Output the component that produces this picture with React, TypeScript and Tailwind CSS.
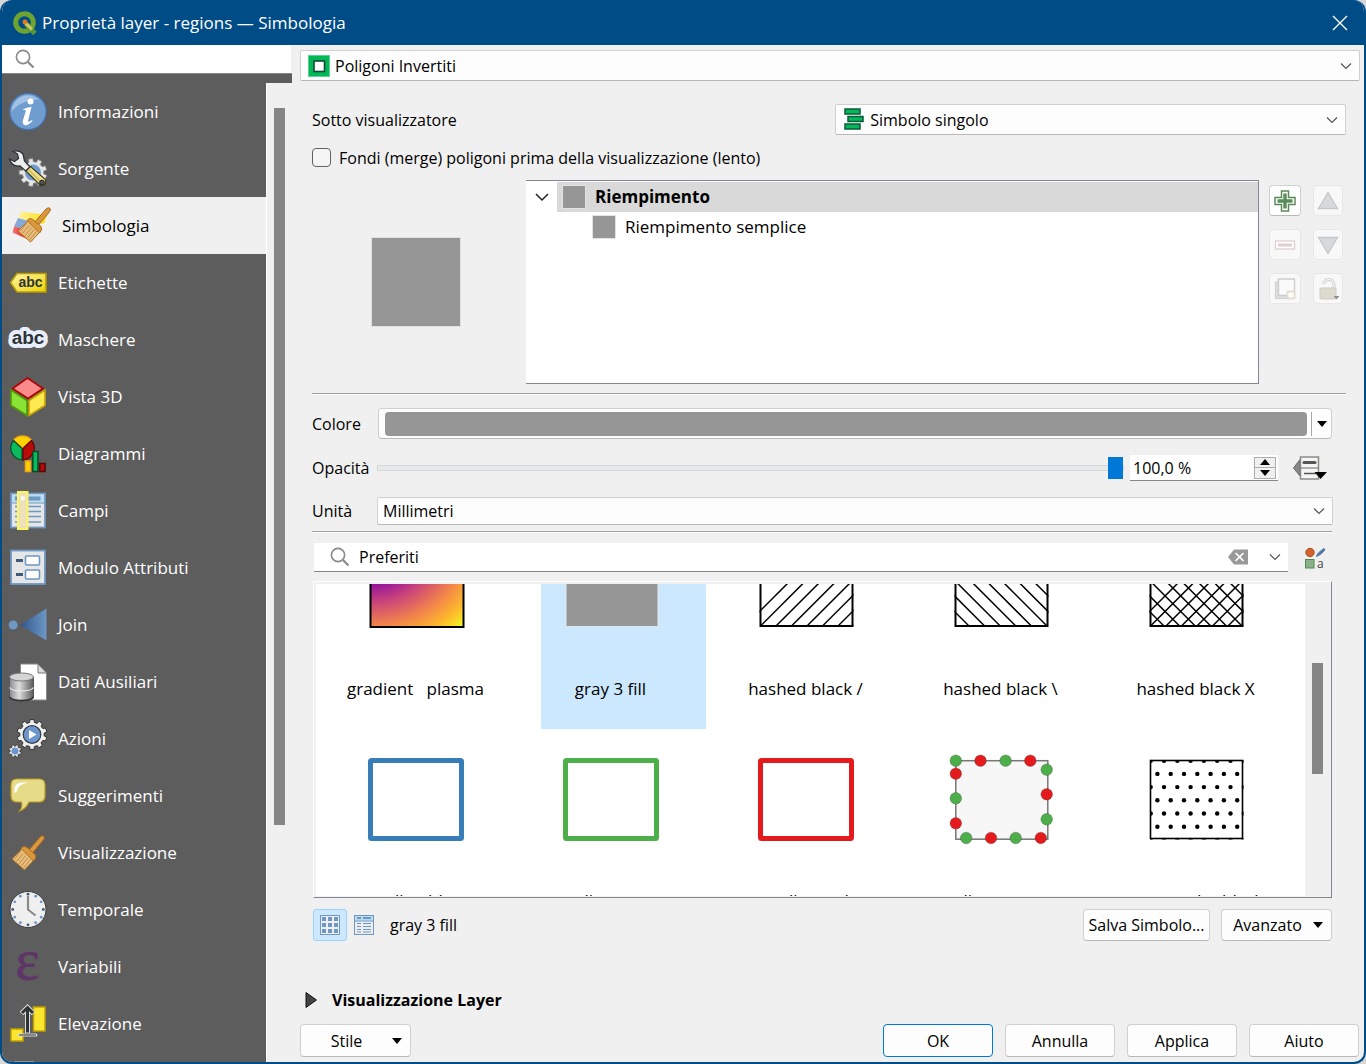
import { ReactNode, useState } from 'react';
import clsx from 'clsx';

/* ---------- helpers ---------- */

function gearPath(cx: number, cy: number, outer: number, inner: number, teeth: number) {
  const step = (Math.PI * 2) / teeth;
  const points: string[] = [];
  for (let i = 0; i < teeth; i++) {
    const a = i * step + step / 2;
    const corners: [number, number][] = [
      [inner, -0.3],
      [outer, -0.22],
      [outer, 0.22],
      [inner, 0.3],
    ];
    corners.forEach(([r, t]) => {
      points.push(`${(cx + r * Math.cos(a + t * step)).toFixed(1)} ${(cy + r * Math.sin(a + t * step)).toFixed(1)}`);
    });
  }
  return `M${points.join('L')}Z`;
}

function Chevron({ className }: { className?: string }) {
  return (
    <svg viewBox="0 0 14 14" className={clsx('size-[14px] pointer-events-none', className)} fill="none" stroke="currentColor" strokeWidth="1.2">
      <path d="M2 4.5 7 9.5 12 4.5" />
    </svg>
  );
}

function Caret({ className }: { className?: string }) {
  return (
    <svg viewBox="0 0 10 6" className={clsx('w-[10px] h-[6px]', className)}>
      <path d="M0 0H10L5 6Z" fill="#000" />
    </svg>
  );
}

function SearchGlyph() {
  return (
    <svg viewBox="0 0 20 20" className="size-5 shrink-0" fill="none" stroke="#8a8a8a">
      <circle cx="8" cy="8" r="6.6" strokeWidth="1.6" />
      <path d="M13 13 18.5 18.5" strokeWidth="2.2" />
    </svg>
  );
}

/* ---------- sidebar icons ---------- */

function Brush({ x = 0, y = 0 }: { x?: number; y?: number }) {
  return (
    <g transform={`translate(${x} ${y})`}>
      <path d="M20.500 17.500 32.500 3.500Q34.500 2 36 3.500 37 5 35.500 6.800L24.500 20Z" fill="#d9973f" stroke="#a8661a" strokeWidth="1" />
      <path d="M14 15.500 26.500 24.500 25 28 16.500 37 4 26 13 17Z" fill="#e7bd7d" stroke="#b0711e" strokeWidth="1" />
      <path d="M13 15.500Q16 12 19.500 15L27 21.500Q29 25 25.500 28Z" fill="#d9973f" stroke="#b0711e" strokeWidth="1" />
      <path d="M12.500 18.500 6 26.500M15 20.500 8.500 28.500M17.500 22.500 11 31M20 24.500 13.500 33M22.500 26.500 15.500 35" stroke="#b98036" strokeWidth=".8" />
    </g>
  );
}

const ICONS: Record<string, ReactNode> = {
  info: (
    <>
      <circle cx="20" cy="19.500" r="18.200" fill="#6f9dd0" stroke="#4571ad" strokeWidth="1.200" />
      <path d="M3.500 20A16.500 16.500 0 0 1 31 7.500Q12 8 3.500 20Z" fill="#a3c1e4" />
      <circle cx="22.500" cy="9.500" r="3" fill="#fff" />
      <path d="M14.500 17.500Q19 15.500 23.500 14.800L20 29Q20.500 31 24 28L24.500 29Q20 34 16.500 33 14 32 15 28L18 18.500Z" fill="#fff" />
    </>
  ),
  source: (
    <>
      <path d={gearPath(25, 23.5, 14, 10.8, 9)} fill="#e6e6e6" stroke="#8a8a8a" strokeWidth=".8" />
      <circle cx="25" cy="23.500" r="8" fill="#6f9dd0" />
      <path d="M5 2.500Q11 .5 15 5L16.500 12 22 18 17.500 22 12 17Q4 18 1.500 10L6.500 12.500 10.500 9.500 9.500 5Z" fill="#eceeed" stroke="#2e3436" strokeWidth="1.300" />
      <path d="M18 22 22.500 17.500 37.500 30.500Q39 36 33 37Z" fill="#efe08a" stroke="#3c3a22" strokeWidth="1.200" />
      <path d="M21 21 32 32" stroke="#c9b65d" strokeWidth="1.500" />
      <circle cx="34" cy="33.500" r="2.400" fill="#555" stroke="#222" />
    </>
  ),
  symbology: (
    <>
      <path d="M9.500 5.500 35 9 32 18 6 12Z" fill="url(#symYellow)" />
      <path d="M6 12 27 18 22 28 2 20.500Z" fill="#86a9d8" />
      <path d="M2 20.500 24 27 20 35 .5 26.500Z" fill="url(#symRed)" />
      <Brush x={2} y={-1} />
      <defs>
        <linearGradient id="symYellow"><stop offset="0" stopColor="#fff3a0" /><stop offset="1" stopColor="#fce013" /></linearGradient>
        <linearGradient id="symRed"><stop offset="0" stopColor="#f47b7b" /><stop offset=".5" stopColor="#ee1c1c" /></linearGradient>
      </defs>
    </>
  ),
  labels: (
    <>
      <path d="M2.500 19.500 9 10.500H38V29H9Z" fill="url(#tagFill)" stroke="#b99a08" strokeWidth="1.600" />
      <text x="22.500" y="23.500" textAnchor="middle" fontFamily="'Liberation Sans', sans-serif" fontWeight="700" fontSize="14" fill="#2e3436">abc</text>
      <defs>
        <linearGradient id="tagFill" x2="1" y2="1"><stop offset="0" stopColor="#fff7a8" /><stop offset="1" stopColor="#ecd200" /></linearGradient>
      </defs>
    </>
  ),
  masks: (
    <text x="20" y="24" textAnchor="middle" fontFamily="'Liberation Sans', sans-serif" fontWeight="700" fontSize="19" fill="#2e3436" stroke="#e9eefc" strokeWidth="8" strokeLinejoin="round" paintOrder="stroke">abc</text>
  ),
  view3d: (
    <g strokeWidth="1.600">
      <path d="M3 13 19 23.500V38.500L3 28.500Z" fill="#8ae234" stroke="#4e9a06" />
      <path d="M37 13 21 23.500V38.500L37 28.500Z" fill="#fce94f" stroke="#c4a000" />
      <path d="M19.500 1 35 11.500 20 21.500 4.500 11.500Z" fill="#f98b8b" stroke="#b30000" />
    </g>
  ),
  diagrams: (
    <>
      <path d="M14.500 14 5.500 6A12 12 0 0 1 23.500 6Z" fill="#fdd400" stroke="#f5a214" strokeWidth="1.200" />
      <path d="M14 14.500V26A12 12 0 0 1 5.500 6.500Z" fill="#0abb5b" stroke="#0a4a2a" strokeWidth="1.200" />
      <path d="M15 14.500V26A12 12 0 0 0 23.500 6.500Z" fill="#b80c09" stroke="#5e0605" strokeWidth="1.200" />
      <path d="M17.500 27V37.500H22.500V27Z" fill="#fdd400" stroke="#f5a214" strokeWidth="1.600" />
      <path d="M24.800 17.500V37.500H30V17.500Z" fill="#0abb5b" stroke="#0a4a2a" strokeWidth="1.600" />
      <path d="M31.800 29.500V37.500H37V29.500Z" fill="#b80c09" stroke="#5e0605" strokeWidth="1.600" />
    </>
  ),
  fields: (
    <>
      <rect x="3" y="2.500" width="34" height="34" fill="#e6e6e6" stroke="#6d97c4" strokeWidth="1.800" />
      <rect x="4" y="3.500" width="32" height="8" fill="#b9dcee" />
      <rect x="7" y="5.500" width="25.500" height="4" fill="#6d97c4" />
      <path d="M3 12H37" stroke="#6d97c4" strokeWidth="1.200" />
      <path d="M7 15.500H33M7 20.500H33M7 25.500H33M7 31H33" stroke="#6d97c4" strokeWidth="1.600" />
      <rect x="10" y="1" width="9.500" height="37" fill="#eee0b8" stroke="#fdf65f" strokeWidth="2" />
      <rect x="13" y="5.500" width="3.500" height="3.500" fill="#fff" />
    </>
  ),
  form: (
    <>
      <rect x="3" y="2.500" width="34" height="33.500" fill="#e6e6e6" stroke="#6d97c4" strokeWidth="1.800" />
      <path d="M8 12.500H15M8 26.500H15" stroke="#415a75" strokeWidth="3" />
      <rect x="17.500" y="8" width="14" height="9" rx="1" fill="#fff" stroke="#6d97c4" strokeWidth="1.600" />
      <rect x="17.500" y="22" width="14" height="9" rx="1" fill="#fff" stroke="#6d97c4" strokeWidth="1.600" />
    </>
  ),
  join: (
    <>
      <circle cx="5.200" cy="20" r="4.500" fill="#6d97c4" />
      <path d="M12 20 38.500 3.500V35.500Z" fill="url(#joinFill)" />
      <defs>
        <linearGradient id="joinFill"><stop offset="0" stopColor="#30568c" /><stop offset="1" stopColor="#6d97c4" /></linearGradient>
      </defs>
    </>
  ),
  auxiliary: (
    <>
      <path d="M12.500 2H30L38.500 11V38H12.500Z" fill="#fff" stroke="#888" />
      <path d="M30 2V11H38.500Z" fill="#ddd" stroke="#777" />
      <path d="M1.500 15V35Q2 39 13.500 39T25.500 35V15Z" fill="url(#dbFill)" stroke="#555" />
      <ellipse cx="13.500" cy="15" rx="12" ry="4" fill="#d5d5d5" stroke="#777" />
      <path d="M1.500 25.500Q4 29 13.500 29T25.500 25.500" fill="none" stroke="#eee" strokeWidth="1.200" />
      <path d="M1.500 35Q4 38.500 13.500 38.500T25.500 35" fill="none" stroke="#333" strokeWidth="1.500" />
      <defs>
        <linearGradient id="dbFill"><stop offset="0" stopColor="#8a8a8a" /><stop offset=".4" stopColor="#dedede" /><stop offset="1" stopColor="#5a5a5a" /></linearGradient>
      </defs>
    </>
  ),
  actions: (
    <>
      <path d={gearPath(24, 15.500, 15, 12.3, 10)} fill="#f0f0ef" stroke="#333" strokeWidth="1" />
      <circle cx="24" cy="15.500" r="8.800" fill="#6d97cc" stroke="#333a45" strokeWidth="1.200" />
      <path d="M21 11V20L28.500 15.500Z" fill="#fff" />
      <path d={gearPath(7, 32, 6.600, 5, 8)} fill="#f0f0ef" stroke="#333" strokeWidth=".8" />
      <circle cx="7" cy="32" r="3.600" fill="#6d97cc" />
    </>
  ),
  tips: (
    <>
      <path d="M9 3H31Q37 3 37 9V20Q37 26 31 26H21Q18 33 11.500 35 15 31 13.500 26H9Q3 26 3 20V9Q3 3 9 3Z" fill="#e6dc88" stroke="#c09b1e" strokeWidth="1.200" />
      <path d="M6.500 17Q5 6.500 14 6.500H21Q10 7.500 8.500 16Z" fill="#fff" />
    </>
  ),
  rendering: <Brush />,
  temporal: (
    <>
      <circle cx="20" cy="19.500" r="18" fill="#efefef" stroke="#3d3d3d" strokeWidth="1" />
      {Array.from({ length: 12 }, (_, i) => {
        const a = (i * Math.PI) / 6;
        return <circle key={i} cx={20 + 15.3 * Math.sin(a)} cy={19.5 - 15.3 * Math.cos(a)} r="1.400" fill={i % 3 ? '#6d97cc' : '#415a75'} />;
      })}
      <path d="M20 6V19.500L27.500 25.500" fill="none" stroke="#8b8b8b" strokeWidth="2.200" />
    </>
  ),
  variables: (
    <text x="19.500" y="32" textAnchor="middle" fontFamily="'Liberation Serif', serif" fontSize="58" fill="#5f3568" stroke="#5f3568" strokeWidth=".8">ε</text>
  ),
  elevation: (
    <>
      <rect x="25.500" y="3" width="11.500" height="24" fill="#fbe62e" stroke="#c4a000" strokeWidth="1.500" />
      <rect x="3" y="25" width="12" height="12" fill="#fbe62e" stroke="#c4a000" strokeWidth="1.500" />
      <path d="M11 31H28" stroke="#ddd" strokeWidth="3" strokeLinecap="round" />
      <path d="M11 31H28" stroke="#2e3436" strokeWidth="1.200" />
      <path d="M19.500 4V29M13.500 9.500 19.500 3.500 25.500 9.500" fill="none" stroke="#ddd" strokeWidth="5" />
      <path d="M19.500 4V28.500M14 9 19.500 3.500 25 9" fill="none" stroke="#2e3436" strokeWidth="3" />
    </>
  ),
};

const PAGES = [
  { id: 'info', label: 'Informazioni' },
  { id: 'source', label: 'Sorgente' },
  { id: 'symbology', label: 'Simbologia' },
  { id: 'labels', label: 'Etichette' },
  { id: 'masks', label: 'Maschere' },
  { id: 'view3d', label: 'Vista 3D' },
  { id: 'diagrams', label: 'Diagrammi' },
  { id: 'fields', label: 'Campi' },
  { id: 'form', label: 'Modulo Attributi' },
  { id: 'join', label: 'Join' },
  { id: 'auxiliary', label: 'Dati Ausiliari' },
  { id: 'actions', label: 'Azioni' },
  { id: 'tips', label: 'Suggerimenti' },
  { id: 'rendering', label: 'Visualizzazione' },
  { id: 'temporal', label: 'Temporale' },
  { id: 'variables', label: 'Variabili' },
  { id: 'elevation', label: 'Elevazione' },
];

function Sidebar() {
  const [active, setActive] = useState('symbology');

  return (
    <aside className="w-[290px] shrink-0 flex flex-col min-h-0">
      <label className="h-7 shrink-0 bg-white flex items-center gap-2 pl-[13px] mr-px">
        <SearchGlyph />
        <input type="text" aria-label="Cerca" className="min-w-0 flex-1 outline-none text-base" />
      </label>
      <div className="h-[10px] shrink-0 bg-[#5d5d5d] border-t border-[#858585]" />
      <div className="flex flex-1 min-h-0">
        <nav className="w-[264px] bg-[#5d5d5d] overflow-hidden">
          {PAGES.map((page) => (
            <button
              key={page.id}
              type="button"
              onClick={() => setActive(page.id)}
              className={clsx(
                'w-full h-[57px] flex items-center gap-[10px] text-[17px] text-left',
                page.id === active ? 'bg-[#f0f0f0] text-black pl-[10px]' : 'text-white pl-[6px]'
              )}
            >
              <svg viewBox="0 0 40 40" className="size-10 shrink-0 overflow-visible">{ICONS[page.id]}</svg>
              {page.label}
            </button>
          ))}
          <div className="ml-3 mt-[9px] w-5 h-1 bg-[#8f8f8f]" />
        </nav>
        <div className="flex-1 border-l border-white pl-[7px] pt-[25px]">
          <div className="w-[11px] h-[717px] bg-[#858585]" />
        </div>
      </div>
    </aside>
  );
}

/* ---------- form controls ---------- */

interface ComboProps {
  label: string;
  id?: string;
  value: string;
  icon?: ReactNode;
  className?: string;
}

function Combo({ label, id, value, icon, className }: ComboProps) {
  return (
    <div className={clsx('relative flex items-center', className)}>
      {icon && <span className="absolute left-2 pointer-events-none">{icon}</span>}
      <select
        id={id}
        aria-label={label}
        defaultValue={value}
        className={clsx(
          'appearance-none w-full h-full bg-[#fdfdfd] border border-[#d0d0d0] border-b-[#b8b8b8] rounded-xs pr-8 outline-none',
          icon ? 'pl-[34px]' : 'pl-[5px]'
        )}
      >
        <option>{value}</option>
      </select>
      <Chevron className="absolute right-[7px] text-[#555]" />
    </div>
  );
}

function PushButton({ children, primary, className }: { children: ReactNode; primary?: boolean; className?: string }) {
  return (
    <button
      type="button"
      className={clsx(
        'rounded-[4px] border bg-[#fdfdfd] flex items-center justify-center whitespace-nowrap',
        primary ? 'border-[#0078d4]' : 'border-[#d0d0d0] border-b-[#b8b8b8]',
        className
      )}
    >
      {children}
    </button>
  );
}

function ToolButton({ label, disabled, children }: { label: string; disabled?: boolean; children: ReactNode }) {
  return (
    <button
      type="button"
      aria-label={label}
      disabled={disabled}
      className={clsx(
        'h-[31px] rounded-[4px] border flex items-center justify-center',
        disabled ? 'bg-[#f8f8f8] border-[#e7e7e7]' : 'bg-white border-[#d0d0d0] border-b-[#b8b8b8]'
      )}
    >
      <svg viewBox="0 0 24 24" className="size-6">{children}</svg>
    </button>
  );
}

function Separator({ className }: { className?: string }) {
  return <hr className={clsx('h-[2px] border-0 border-t border-[#a0a0a0] bg-white shrink-0', className)} />;
}

function LayerTools() {
  return (
    <div className="grid grid-cols-[32px_30px] gap-x-3 gap-y-[13px] content-start pt-[5px] pr-[3px]">
      <ToolButton label="Aggiungi livello">
        <path d="M8.500 2H15.500V8.500H22V15.500H15.500V22H8.500V15.500H2V8.500H8.500Z" fill="#fff" stroke="#5a8c5a" strokeWidth="1.500" />
        <path d="M12 4.500V19.500M4.500 12H19.500" stroke="#5a8c5a" strokeWidth="3.400" />
      </ToolButton>
      <ToolButton label="Sposta su" disabled>
        <path d="M12 3.500 21.500 19.500H2.500Z" fill="#d6dadd" stroke="#c4c6c7" strokeWidth="1.300" />
      </ToolButton>
      <ToolButton label="Rimuovi livello" disabled>
        <rect x="2.500" y="8" width="19" height="8" fill="#fff" stroke="#e0cfd1" strokeWidth="1.300" />
        <path d="M5 12H19" stroke="#e0cfd1" strokeWidth="3" />
      </ToolButton>
      <ToolButton label="Sposta giù" disabled>
        <path d="M12 20.500 21.500 4.500H2.500Z" fill="#d6dadd" stroke="#c4c6c7" strokeWidth="1.300" />
      </ToolButton>
      <ToolButton label="Duplica livello" disabled>
        <path d="M2.500 5H16V21.500H2.500Z" fill="#dedede" stroke="#cfcfcf" />
        <path d="M5.500 2H21.500V18.500H5.500Z" fill="#fafafa" stroke="#cdcdcd" strokeWidth="1.400" />
        <rect x="13.500" y="13.500" width="9" height="9" rx="2" fill="#e0dfd2" />
        <path d="M18 15V21M15.300 16.500 20.700 19.500M20.700 16.500 15.300 19.500" stroke="#fff" strokeWidth="1.500" />
      </ToolButton>
      <ToolButton label="Blocca colore" disabled>
        <path d="M7.500 7Q8.500 2.500 13 2.500T18 8V11" fill="none" stroke="#d3d3d3" strokeWidth="3.200" />
        <path d="M7.500 7Q8.500 2.500 13 2.500T18 8V11" fill="none" stroke="#f6f6f6" strokeWidth="1.200" />
        <rect x="4" y="11" width="16" height="11" rx="1" fill="#dddbce" stroke="#cdcbbe" />
        <path d="M17.500 19H23.500L20.500 22.500Z" fill="#8f8f8f" />
      </ToolButton>
    </div>
  );
}

/* ---------- symbol swatches ---------- */

const GREEN = '#4daf4a';
const RED = '#e41a1c';

function Hatch({ id, forward, backward }: { id: string; forward?: boolean; backward?: boolean }) {
  const lines = Array.from({ length: 14 }, (_, i) => i);
  return (
    <>
      <clipPath id={id}><rect x="11.500" y="10" width="94" height="79" /></clipPath>
      <g clipPath={`url(#${id})`} stroke="#000" strokeWidth="1.500">
        {forward && lines.map((i) => <path key={`f${i}`} d={`M${12.5 + 15.5 * (i - 1)} 88l90 -90`} />)}
        {backward && lines.map((i) => <path key={`b${i}`} d={`M${26 + 15.6 * i} 88l-90 -90`} />)}
      </g>
      <rect x="12.500" y="11" width="92" height="77" fill="none" stroke="#000" strokeWidth="2" />
    </>
  );
}

function Outline({ color }: { color: string }) {
  return <rect x="12.500" y="10.500" width="91" height="78" rx="1" fill="#fff" stroke={color} strokeWidth="5" strokeLinejoin="round" />;
}

const MARKERS: [number, number, string][] = [
  [12.8, 10.7, GREEN], [37.5, 10.7, RED], [62.6, 10.7, GREEN], [87.3, 10.7, RED],
  [103.7, 19.7, GREEN], [103.7, 44.3, RED], [103.7, 69.3, GREEN],
  [97.8, 88, RED], [72.7, 88, GREEN], [48, 88, RED], [23.2, 88, GREEN],
  [12.8, 73.3, RED], [12.8, 48.3, GREEN], [12.8, 23.7, RED],
];

const SYMBOLS: { name: string; art: ReactNode }[] = [
  {
    name: 'gradient   plasma',
    art: (
      <>
        <defs>
          <radialGradient id="plasma" cx="0" cy="0" r="1.400">
            <stop offset="0" stopColor="#0d0887" />
            <stop offset=".3" stopColor="#8f0da4" />
            <stop offset=".5" stopColor="#cc4778" />
            <stop offset=".7" stopColor="#f2844b" />
            <stop offset=".86" stopColor="#fdb72c" />
            <stop offset="1" stopColor="#f0f921" />
          </radialGradient>
        </defs>
        <rect x="12.500" y="11" width="93" height="78" fill="url(#plasma)" stroke="#000" strokeWidth="2" />
      </>
    ),
  },
  { name: 'gray 3 fill', art: <rect x="13" y="11" width="92" height="77.500" fill="#969696" stroke="#e6e6e6" /> },
  { name: 'hashed black /', art: <Hatch id="hatchF" forward /> },
  { name: 'hashed black \\', art: <Hatch id="hatchB" backward /> },
  { name: 'hashed black X', art: <Hatch id="hatchX" forward backward /> },
  { name: 'outline blue', art: <Outline color="#377eb8" /> },
  { name: 'outline green', art: <Outline color={GREEN} /> },
  { name: 'outline red', art: <Outline color={RED} /> },
  {
    name: 'outline xpattern',
    art: (
      <>
        <rect x="12.800" y="10.700" width="92" height="78.500" fill="#f7f7f7" stroke="#777" strokeWidth="1.500" />
        {MARKERS.map(([x, y, color], i) => (
          <circle key={i} cx={x} cy={y} r="5.800" fill={color} stroke="#333" strokeWidth=".3" />
        ))}
      </>
    ),
  },
  {
    name: 'pattern dot black',
    art: (
      <>
        <clipPath id="dots"><rect x="12" y="10" width="93.500" height="79.500" /></clipPath>
        <g clipPath="url(#dots)">
          {[0, 1, 2, 3, 4, 5, 6].map((row) =>
            [0, 1, 2, 3, 4, 5, 6, 7].map((col) => (
              <circle key={`${row}-${col}`} cx={(row % 2 ? 19.4 : 12.7) + col * 13.3} cy={10.7 + row * 13.2} r="2.200" />
            ))
          )}
        </g>
        <rect x="12.500" y="10.500" width="92" height="78" fill="none" stroke="#000" strokeWidth="1.600" />
      </>
    ),
  },
];

function SymbolGallery() {
  const [selected, setSelected] = useState('gray 3 fill');

  return (
    <div className="flex-1 min-h-0 mt-[9px] mr-8 ml-px flex bg-[#f0f0f0] border-t border-l border-white border-r border-b border-r-[#828790] border-b-[#828790] pt-[2px] pl-[2px] pb-px">
      <div className="flex-1 bg-white overflow-hidden">
        <div className="grid grid-cols-5 -mt-[67px] pl-[2px] pr-3">
          {SYMBOLS.map((symbol) => (
            <button
              key={symbol.name}
              type="button"
              onClick={() => setSelected(symbol.name)}
              className="relative h-[212px] flex flex-col items-center pt-[21px] text-[17px]"
            >
              {symbol.name === selected && <span className="absolute inset-y-0 left-7 right-[2px] bg-[#cce8ff]" />}
              <svg viewBox="0 0 116 100" className="relative w-[116px] h-[100px] shrink-0">{symbol.art}</svg>
              <span className="relative mt-[39px] leading-6 whitespace-pre">{symbol.name}</span>
            </button>
          ))}
        </div>
      </div>
      <div className="w-[26px] pl-[7px] pt-[79px]">
        <div className="w-[11px] h-[111px] bg-[#858585]" />
      </div>
    </div>
  );
}

/* ---------- main panel ---------- */

function SymbologyPanel() {
  return (
    <main className="flex-1 min-w-0 flex flex-col">
      <Combo
        label="Visualizzatore"
        value="Poligoni Invertiti"
        className="h-[31px] shrink-0 mt-[5px] ml-2 mr-1"
        icon={
          <svg viewBox="0 0 22 22" className="size-[22px]">
            <rect x=".5" y=".5" width="21" height="21" fill="#02b857" stroke="#5fd093" />
            <rect x="6" y="6" width="10.500" height="10.500" fill="#fff" stroke="#0a4a3a" strokeWidth="1.600" />
          </svg>
        }
      />

      <section className="flex-1 min-h-0 flex flex-col pl-5 pt-[23px]">
        <div className="flex items-center h-[31px] shrink-0 mr-[18px]">
          <label htmlFor="sub-renderer" className="flex-1">Sotto visualizzatore</label>
          <Combo
            id="sub-renderer"
            label="Sotto visualizzatore"
            value="Simbolo singolo"
            className="h-[31px] w-[49.4%]"
            icon={
              <svg viewBox="0 0 22 24" className="w-[22px] h-6" fill="#02b857" stroke="#0a5a3a" strokeWidth="1.500">
                <path d="M2 1H17V6H2ZM5 8.500H20V13.500H5ZM2 16H17V21H2Z" />
              </svg>
            }
          />
        </div>

        <label className="flex items-center gap-2 h-[21px] mt-3 shrink-0">
          <input type="checkbox" className="appearance-none size-[19px] rounded-[4px] border border-[#626262] bg-[#f5f5f5]" />
          Fondi (merge) poligoni prima della visualizzazione (lento)
        </label>

        <div className="flex mt-3 h-[204px] shrink-0 mr-[18px]">
          <div className="w-[208px] mr-[6px] flex items-center justify-center">
            <div className="size-[90px] bg-[#969696] border border-[#e0e0e0]" />
          </div>
          <ul className="flex-1 mr-[10px] bg-white border-t border-r border-b border-[#828790] text-[17px] pt-px">
            <li>
              <div className="flex h-[30px]">
                <button type="button" aria-label="Comprimi" className="w-[31px] flex items-center justify-center">
                  <svg viewBox="0 0 16 16" className="size-4" fill="none" stroke="#222" strokeWidth="1.500">
                    <path d="M2 5 8 11 14 5" />
                  </svg>
                </button>
                <button type="button" className="flex-1 flex items-center gap-[9px] bg-[#d9d9d9] pl-[5px] font-bold">
                  <span className="size-6 bg-[#969696] border border-[#e3e3e3]" />
                  Riempimento
                </button>
              </div>
              <ul>
                <li>
                  <button type="button" className="flex items-center gap-[9px] h-[30px] pl-[66px]">
                    <span className="size-6 bg-[#969696] border border-[#e3e3e3]" />
                    Riempimento semplice
                  </button>
                </li>
              </ul>
            </li>
          </ul>
          <LayerTools />
        </div>

        <Separator className="mt-[9px] mr-[18px]" />

        <div className="flex items-center mt-[13px] h-[31px] shrink-0 mr-8">
          <span className="w-[66px]">Colore</span>
          <div className="flex-1 h-full flex items-center rounded-[4px] border border-[#d0d0d0] border-b-[#b8b8b8] bg-[#fdfdfd] pl-[6px]">
            <button type="button" aria-label="Colore" className="flex-1 h-6 rounded-[4px] bg-[#969696]" />
            <button type="button" aria-label="Opzioni colore" className="w-5 h-6 ml-1 border-l border-[#a8a8a8] flex items-center justify-center">
              <Caret />
            </button>
          </div>
        </div>

        <div className="flex items-center mt-[14px] h-[30px] shrink-0 mr-9">
          <label htmlFor="opacity" className="w-[65px]">Opacità</label>
          <input
            id="opacity"
            type="range"
            min={0}
            max={100}
            defaultValue={100}
            className="appearance-none flex-1 min-w-0 h-[6px] bg-[#e7eaea] border border-[#d6d6d6] [&::-webkit-slider-thumb]:appearance-none [&::-webkit-slider-thumb]:w-[15px] [&::-webkit-slider-thumb]:h-[22px] [&::-webkit-slider-thumb]:bg-[#0078d7]"
          />
          <div className="ml-[6px] w-[148px] h-[26px] flex items-center bg-white border-b border-[#868686] pr-[2px]">
            <input type="text" aria-label="Valore opacità" defaultValue="100,0 %" className="flex-1 min-w-0 h-full pl-[3px] outline-none" />
            <div className="w-[22px] h-[22px] flex flex-col border border-[#adadad] bg-[#f0f0f0]">
              <button type="button" aria-label="Aumenta" className="flex-1 flex items-center justify-center border-b border-[#adadad]">
                <Caret className="rotate-180" />
              </button>
              <button type="button" aria-label="Diminuisci" className="flex-1 flex items-center justify-center">
                <Caret />
              </button>
            </div>
          </div>
          <button type="button" aria-label="Sovrascrittura dati" className="ml-[14px] w-9 flex items-center">
            <svg viewBox="0 0 36 26" className="w-9 h-[26px]">
              <path d="M1.500 13 8 4.500V21Z" fill="#888" stroke="#666" />
              <rect x="8.500" y="2" width="18" height="22" fill="#f5f5f5" stroke="#8a8a85" strokeWidth="1.500" />
              <path d="M8.500 13H27" stroke="#8a8a85" strokeWidth="1.300" />
              <path d="M12 7.500H23" stroke="#555" strokeWidth="3" strokeLinecap="round" />
              <path d="M12 18.500H24" stroke="#555" strokeWidth="1.500" />
              <path d="M22.500 17H35L28.500 24Z" />
            </svg>
          </button>
        </div>

        <div className="flex items-center mt-[14px] h-7 shrink-0 mr-[31px]">
          <label htmlFor="unit" className="w-[65px]">Unità</label>
          <Combo id="unit" label="Unità" value="Millimetri" className="flex-1 h-7" />
        </div>

        <Separator className="mt-[6px] mr-8" />

        <div className="flex items-center mt-[10px] h-[29px] shrink-0 ml-[2px] mr-[38px]">
          <div className="flex-1 h-full flex items-center bg-white border-b border-[#868686] pl-4 pr-[6px]">
            <SearchGlyph />
            <input type="text" aria-label="Filtra simboli" defaultValue="Preferiti" className="flex-1 min-w-0 ml-[9px] outline-none" />
            <button type="button" aria-label="Cancella">
              <svg viewBox="0 0 20 16" className="w-5 h-4">
                <path d="M6 .5H20V15.500H6L0 8Z" fill="#999" />
                <path d="M7.500 4 15.500 12M15.500 4 7.500 12" stroke="#fff" strokeWidth="1.700" />
              </svg>
            </button>
            <button type="button" aria-label="Mostra gruppi" className="ml-5">
              <Chevron className="text-[#555]" />
            </button>
          </div>
          <button type="button" aria-label="Gestore stili" className="ml-4">
            <svg viewBox="0 0 22 22" className="size-[22px] overflow-visible">
              <circle cx="6" cy="5.500" r="4.200" fill="#d4622d" stroke="#a74b1f" />
              <path d="M12.500 9.500Q12.500 6.500 20 1.500 21.500 2 20 4 17 8 12.500 9.500Z" fill="#4f78a8" stroke="#4f78a8" />
              <rect x="1.500" y="12.500" width="8.500" height="8.500" fill="#8bb08b" stroke="#4e8a4e" />
              <text x="13" y="20.500" fontSize="12" fontFamily="'Open Sans', sans-serif" fill="#444">a</text>
            </svg>
          </button>
        </div>

        <SymbolGallery />

        <div className="flex items-center mt-[11px] h-8 shrink-0 mr-8">
          <button type="button" aria-label="Vista icone" className="w-[34px] h-8 ml-px rounded-[3px] border border-[#99d1ff] bg-[#cce8ff] flex items-center justify-center">
            <svg viewBox="0 0 20 20" className="size-5">
              <rect x=".5" y=".5" width="19" height="19" fill="#eee" stroke="#6d97c4" />
              <path d="M2 4H18M2 10H18M2 16H18" stroke="#6d97c4" strokeWidth="4" strokeDasharray="4 2" />
            </svg>
          </button>
          <button type="button" aria-label="Vista elenco" className="ml-[7px]">
            <svg viewBox="0 0 20 20" className="size-5">
              <rect x=".5" y=".5" width="19" height="19" fill="#eee" stroke="#6d97c4" />
              <rect x="1" y="1" width="18" height="4.500" fill="#b9dcee" />
              <path d="M3 3H7M9 3H17" stroke="#6d97c4" strokeWidth="2" />
              <path d="M1 6H19" stroke="#6d97c4" />
              <path d="M3 8.500H7M9 8.500H17M3 11.500H7M9 11.500H17M3 14.500H7M9 14.500H17M3 17H7M9 17H17" stroke="#6d97c4" />
            </svg>
          </button>
          <span className="flex-1 ml-4">gray 3 fill</span>
          <PushButton className="w-[127px] h-8">Salva Simbolo...</PushButton>
          <PushButton className="w-[111px] h-8 ml-[11px] gap-[11px] pl-[3px]">
            Avanzato
            <Caret />
          </PushButton>
        </div>
      </section>

      <button type="button" className="flex items-center gap-[14px] h-6 mt-[47px] ml-[13px] font-bold text-base shrink-0">
        <svg viewBox="0 0 13 18" className="w-[13px] h-[18px]">
          <path d="M1 1.500V16.500L11.500 9Z" fill="#444" stroke="#111" />
        </svg>
        Visualizzazione Layer
      </button>

      <footer className="flex mt-3 mb-[5px] ml-2 mr-[5px] shrink-0">
        <PushButton className="w-[111px] h-[33px] gap-[30px] pl-[22px]">
          Stile
          <Caret />
        </PushButton>
        <div className="flex-1" />
        <div className="flex gap-3">
          <PushButton primary className="w-[110px] h-[33px]">OK</PushButton>
          <PushButton className="w-[110px] h-[33px]">Annulla</PushButton>
          <PushButton className="w-[110px] h-[33px]">Applica</PushButton>
          <PushButton className="w-[110px] h-[33px]">Aiuto</PushButton>
        </div>
      </footer>
    </main>
  );
}

export default function App() {
  return (
    <div className="h-screen bg-[#d8d8d8] font-['Open_Sans',sans-serif] text-base leading-5 text-black">
      <div className="h-full flex flex-col rounded-xl overflow-hidden border-x-2 border-b-2 border-[#004c87] bg-[#f0f0f0]">
        <header className="h-[45px] shrink-0 bg-[#004c87] text-white flex items-center pl-[10px] pr-4">
          <svg viewBox="0 0 26 24" className="w-[26px] h-6">
            <circle cx="12.500" cy="11.500" r="8.800" fill="none" stroke="#6da32f" strokeWidth="5" />
            <path d="M14 13 23 22.500" stroke="#589632" strokeWidth="5" />
            <path d="M12.500 11 20 18.500" stroke="#c9c66a" strokeWidth="3.200" />
            <circle cx="13" cy="11" r="2.400" fill="#ee7913" />
          </svg>
          <h1 className="flex-1 ml-1 text-[17px]">Proprietà layer - regions — Simbologia</h1>
          <button type="button" aria-label="Chiudi">
            <svg viewBox="0 0 16 16" className="size-4" stroke="#fff" strokeWidth="1.400">
              <path d="M1 1 15 15M15 1 1 15" />
            </svg>
          </button>
        </header>
        <div className="flex flex-1 min-h-0">
          <Sidebar />
          <SymbologyPanel />
        </div>
      </div>
    </div>
  );
}
